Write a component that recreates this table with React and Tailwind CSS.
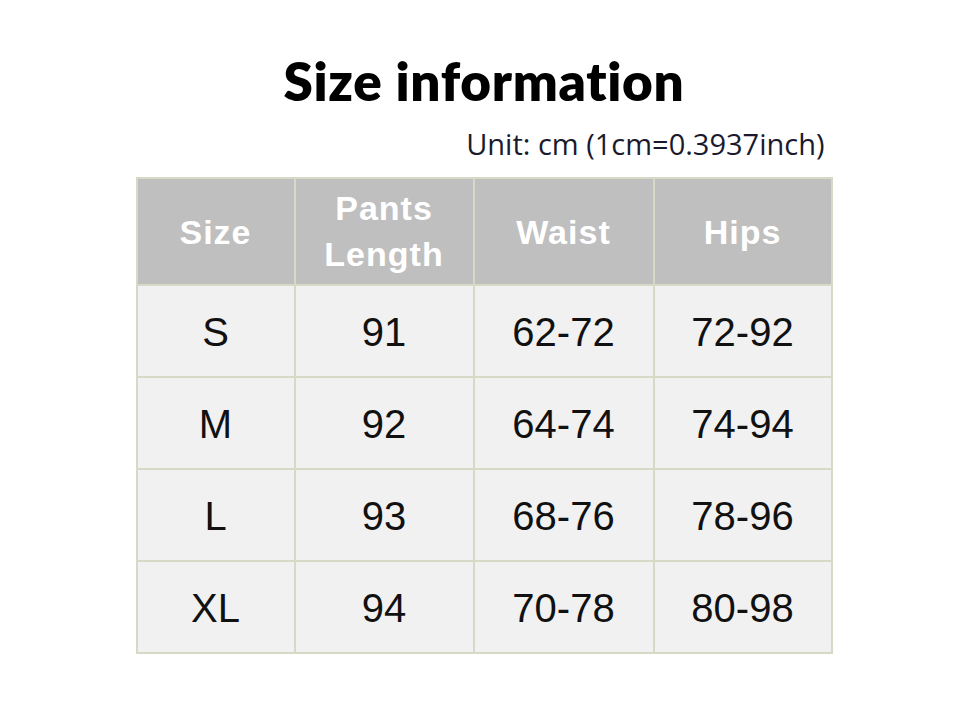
import React from 'react';

const rows = [
  ['S', '91', '62-72', '72-92'],
  ['M', '92', '64-74', '74-94'],
  ['L', '93', '68-76', '78-96'],
  ['XL', '94', '70-78', '80-98'],
];

const cols = ['w-[156px]', 'w-[177px]', 'w-[178px]', 'w-[176px]'];

export default function App() {
  return (
    <div className="w-[968px] h-[703px] bg-white flex flex-col items-center">
      {/* Title */}
      <h1 className="mt-[50px] h-[62px] leading-[62px] text-[53px] font-extrabold text-black font-['Lato',sans-serif] tracking-[0.7px]">
        Size information
      </h1>

      <div className="w-[697px] flex justify-end mt-[15px]">
        <p className="text-[29px] leading-[34px] text-[#1a1a2e] font-['Open_Sans',sans-serif] mr-[8px]">
          Unit: cm (1cm=0.3937inch)
        </p>
      </div>

      {/* Table */}
      <div className="mt-[16px] border-2 border-[#d8d8c6] bg-[#d8d8c6] flex flex-col gap-[2px] font-['Liberation_Sans',Arial,sans-serif]">
        <div className="flex gap-[2px] h-[105px]">
          {['Size', 'Pants Length', 'Waist', 'Hips'].map((h, i) => (
            <div
              key={h}
              className={`${cols[i]} bg-[#bfbfbf] flex items-center justify-center text-center text-white font-bold text-[34px] leading-[46px] tracking-[1px]`}
            >
              {h === 'Pants Length' ? (
                <span className="-mt-[2px]">
                  Pants
                  <br />
                  Length
                </span>
              ) : (
                h
              )}
            </div>
          ))}
        </div>
        {rows.map((r) => (
          <div key={r[0]} className="flex gap-[2px] h-[90px]">
            {r.map((c, i) => (
              <div
                key={i}
                className={`${cols[i]} bg-[#f1f1f1] flex items-center justify-center text-[40px] text-[#111] pt-[2px]`}
              >
                {c}
              </div>
            ))}
          </div>
        ))}
      </div>
    </div>
  );
}
